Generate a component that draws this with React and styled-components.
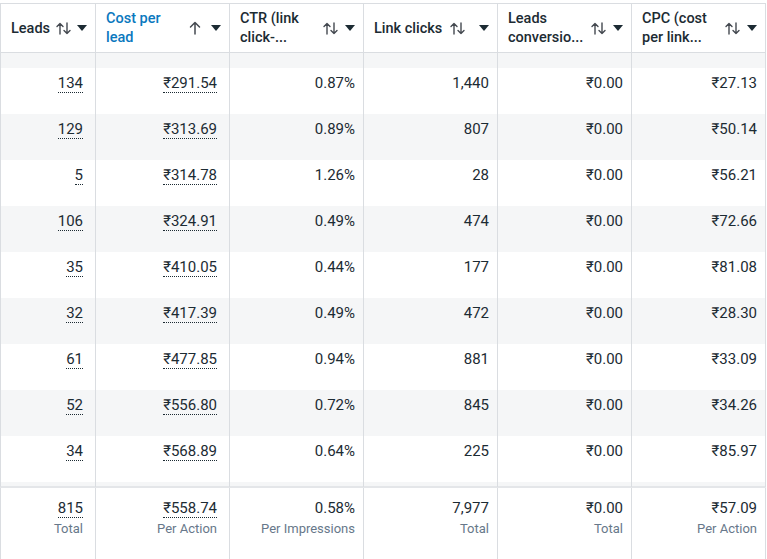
import React from 'react';
import styled, { createGlobalStyle } from 'styled-components';

const GlobalStyle = createGlobalStyle`
    html, body {
        margin: 0;
        padding: 0;
        background: #ffffff;
        font-family: Roboto, "Liberation Sans", Arial, sans-serif;
        color: #1c2b33;
    }
`;

const COLS = '95px 134px 134px 134px 134px 134px';

const Table = styled.div`
    width: 767px;
    height: 559px;
    overflow: hidden;
    padding-top: 3px;
    box-sizing: border-box;
`;

const Grid = styled.div`
    display: grid;
    grid-template-columns: ${COLS};
    width: 766px;
    border-left: 1px solid #dadde1;
    box-sizing: border-box;
`;

const HeaderRow = styled(Grid)`
    border-top: 1px solid #dadde1;
    border-bottom: 1px solid #dadde1;
    background: #ffffff;
`;

const HeaderCell = styled.div`
    height: 48px;
    display: flex;
    align-items: center;
    padding: 0 8px 0 10px;
    border-right: 1px solid #dadde1;
    box-sizing: border-box;
`;

const Title = styled.div`
    width: ${(p) => (p.$wrap ? '77px' : 'auto')};
    flex-shrink: 0;
    font-size: 14.5px;
    font-weight: 500;
    line-height: 19px;
    color: ${(p) => (p.$active ? '#0a78be' : '#1c2b33')};
    white-space: pre-line;
`;

const SortIcon = styled.span`
    display: inline-flex;
    margin-left: ${(p) => (p.$far ? '8px' : '6px')};
    color: #444950;
`;

const Caret = styled.span`
    margin-left: auto;
    display: inline-flex;
    color: #1c2b33;
`;

const SpacerRow = styled(Grid)`
    height: 15px;
    background: #f5f6f7;
`;

const Row = styled(Grid)`
    height: 46px;
    background: ${(p) => (p.$striped ? '#f5f6f7' : '#ffffff')};
`;

const Cell = styled.div`
    border-right: 1px solid #dadde1;
    padding: 5px 8px 0 8px;
    text-align: right;
    font-size: 15px;
    line-height: 21px;
    color: #1c2b33;
    box-sizing: border-box;
`;

const Linked = styled.span`
    display: inline-block;
    margin-right: 4px;
    line-height: 17px;
    border-bottom: 1px dotted #1c2b33;
`;

const GapRow = styled(Grid)`
    height: 6px;
    background: #f5f6f7;
    border-bottom: 2px solid #e4e6e9;
`;

const FooterRow = styled(Grid)`
    height: 80px;
    background: #ffffff;
`;

const FooterCell = styled(Cell)`
    padding-top: 10px;
`;

const Caption = styled.div`
    font-size: 13px;
    line-height: 20px;
    color: #67788a;
    margin-right: ${(p) => (p.$offset ? '4px' : '0')};
`;

const UpDown = () => (
    <svg width="15" height="13" viewBox="0 0 15 13" fill="none" stroke="currentColor" strokeWidth="1.4" strokeLinecap="round" strokeLinejoin="round">
        <path d="M4 12V1.5M1 4.5l3-3 3 3" />
        <path d="M11 1v10.5M8 8.5l3 3 3-3" />
    </svg>
);

const Up = () => (
    <svg width="12" height="14" viewBox="0 0 12 14" fill="none" stroke="currentColor" strokeWidth="1.5" strokeLinecap="round" strokeLinejoin="round">
        <path d="M6 13V1.5M1.5 6l4.5-4.5L10.5 6" />
    </svg>
);

const Down = () => (
    <svg width="10" height="6" viewBox="0 0 10 6">
        <path d="M0 0h10L5 6z" fill="currentColor" />
    </svg>
);

const columns = [
    { title: 'Leads', sort: 'both' },
    { title: 'Cost per\nlead', sort: 'up', active: true, wrap: true },
    { title: 'CTR (link\nclick-...', sort: 'both', wrap: true },
    { title: 'Link clicks', sort: 'both', far: true },
    { title: 'Leads\nconversio...', sort: 'both', wrap: true },
    { title: 'CPC (cost\nper link...', sort: 'both', wrap: true },
];

const rows = [
    ['134', '₹291.54', '0.87%', '1,440', '₹0.00', '₹27.13'],
    ['129', '₹313.69', '0.89%', '807', '₹0.00', '₹50.14'],
    ['5', '₹314.78', '1.26%', '28', '₹0.00', '₹56.21'],
    ['106', '₹324.91', '0.49%', '474', '₹0.00', '₹72.66'],
    ['35', '₹410.05', '0.44%', '177', '₹0.00', '₹81.08'],
    ['32', '₹417.39', '0.49%', '472', '₹0.00', '₹28.30'],
    ['61', '₹477.85', '0.94%', '881', '₹0.00', '₹33.09'],
    ['52', '₹556.80', '0.72%', '845', '₹0.00', '₹34.26'],
    ['34', '₹568.89', '0.64%', '225', '₹0.00', '₹85.97'],
];

const totals = [
    ['815', 'Total'],
    ['₹558.74', 'Per Action'],
    ['0.58%', 'Per Impressions'],
    ['7,977', 'Total'],
    ['₹0.00', 'Total'],
    ['₹57.09', 'Per Action'],
];

const emptyCells = () => columns.map((c) => <Cell key={c.title} />);

const App = () => {
    return (
        <>
            <GlobalStyle />
            <Table>
                <HeaderRow>
                    {columns.map((col) => (
                        <HeaderCell key={col.title}>
                            <Title $active={col.active} $wrap={col.wrap}>{col.title}</Title>
                            <SortIcon $far={col.far}>{col.sort === 'up' ? <Up /> : <UpDown />}</SortIcon>
                            <Caret><Down /></Caret>
                        </HeaderCell>
                    ))}
                </HeaderRow>
                <SpacerRow>{emptyCells()}</SpacerRow>
                {rows.map((row, i) => (
                    <Row key={i} $striped={i % 2 === 1}>
                        {row.map((value, j) => (
                            <Cell key={j}>
                                {j < 2 ? <Linked>{value}</Linked> : value}
                            </Cell>
                        ))}
                    </Row>
                ))}
                <GapRow>{emptyCells()}</GapRow>
                <FooterRow>
                    {totals.map(([value, caption], j) => (
                        <FooterCell key={j}>
                            {j < 2 ? <Linked>{value}</Linked> : <div>{value}</div>}
                            <Caption $offset={j < 2}>{caption}</Caption>
                        </FooterCell>
                    ))}
                </FooterRow>
            </Table>
        </>
    );
};

export default App;
